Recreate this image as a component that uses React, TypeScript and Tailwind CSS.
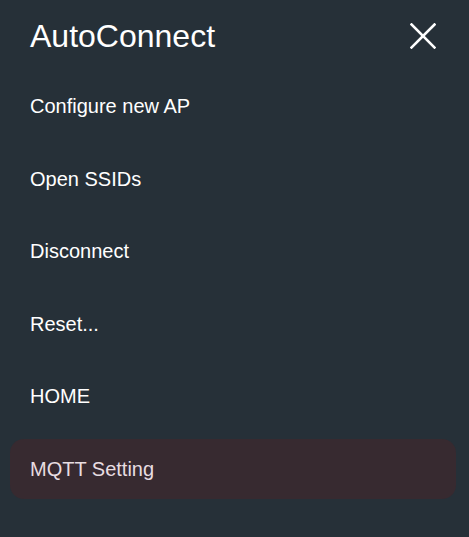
import React from 'react';

const items = ['Configure new AP', 'Open SSIDs', 'Disconnect', 'Reset...', 'HOME', 'MQTT Setting'];

const App: React.FC = () => {
  const active = 'MQTT Setting';

  return (
    <div className="w-[469px] h-[537px] bg-[#263038] text-white font-['Liberation_Sans',Arial,sans-serif] overflow-hidden">
      <div className="flex items-center justify-between h-[71px] pl-[30px] pr-[33px]">
        <h1 className="text-[32px] leading-none font-normal">AutoConnect</h1>
        <button className="text-white" aria-label="Close">
          <svg width="26" height="26" viewBox="0 0 26 26" fill="none" stroke="currentColor" strokeWidth="2.6" strokeLinecap="square">
            <line x1="1.5" y1="1.5" x2="24.5" y2="24.5" />
            <line x1="24.5" y1="1.5" x2="1.5" y2="24.5" />
          </svg>
        </button>
      </div>

      <nav className="flex flex-col gap-[12.6px] mt-[5px] pl-[10px] pr-[13px]">
        {items.map((item) => (
          <a
            key={item}
            href="#"
            className={
              item === active
                ? 'flex items-center h-[60px] pl-5 rounded-[14px] bg-[#372a30] text-[#e8dde1] text-[20px]'
                : 'flex items-center h-[60px] pl-5 rounded-[14px] text-white text-[20px]'
            }
          >
            {item}
          </a>
        ))}
      </nav>
    </div>
  );
};

export default App;
